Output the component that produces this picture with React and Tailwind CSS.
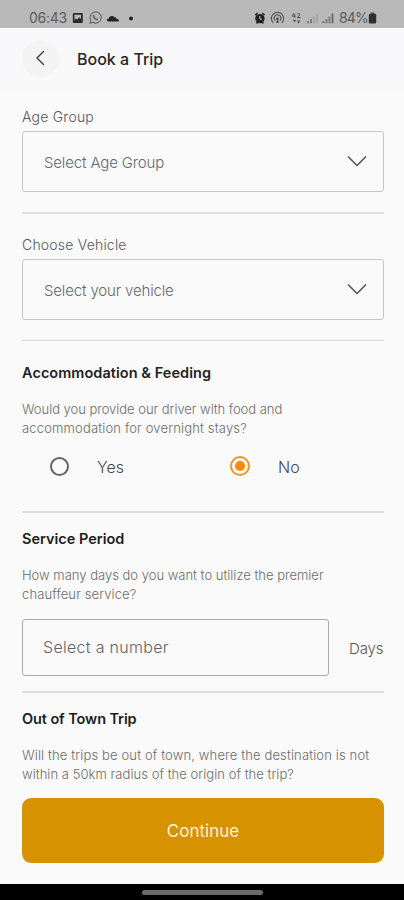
const Line = ({ className = "", children }) => (
  <div className={"whitespace-nowrap " + className}>{children}</div>
);

const Divider = ({ className }) => <div className={"ml-[22px] mr-[20px] " + className} />;

const Chevron = () => (
  <svg width="20" height="13" viewBox="0 0 20 13" fill="none" stroke="#5c5c5c" strokeWidth="1.7" strokeLinecap="round" strokeLinejoin="round">
    <path d="M1.5 2 L10 10.5 L18.5 2" />
  </svg>
);

const SelectBox = ({ text }) => (
  <div className="ml-[22px] mr-[20px] flex h-[61px] items-center justify-between rounded-[3px] border border-[#c6c6c6] pl-[21px] pr-[16px]">
    <Line className="pt-[2px] text-[15px] leading-[20px] font-light tracking-[-0.15px] text-[#66666a]">{text}</Line>
    <Chevron />
  </div>
);

const StatusBar = () => (
  <div className="flex h-[28px] items-center bg-[#b9b9b9] pt-[8px] text-[#5c5c5c]">
    <Line className="ml-[29px] w-[43px] text-[14px] leading-[20px] tracking-[-0.3px]">06:43</Line>
    <svg width="64" height="16" viewBox="72 0 64 16">
      <rect x="72.8" y="3" width="10" height="10" rx="1" fill="#2c2c2c" />
      <path d="M74.5 4.8H81V9L79.3 7.2L77.2 9.6L76 8.5L74.5 10Z" fill="#b9b9b9" />
      <path d="M90 13.2L90.9 10.4A5.6 5.6 0 1 1 92.8 12.3Z" fill="none" stroke="#666" strokeWidth="1.1" />
      <path d="M93 5.2C92.5 8 95.5 10.8 98 10L98.3 8.8L96.9 8.2L96.3 8.9L94.4 7L94.9 6.2L94.2 5Z" fill="#5c5c5c" />
      <path d="M108.5 11.5C106.4 11.5 106.5 8.8 108.8 8.6C109 5.8 113 4.9 114.4 7.4C116 7.1 116.7 8.3 116.7 8.9C119.5 8.8 119.5 11.5 117.8 11.5Z" fill="#242424" />
      <circle cx="131" cy="8.5" r="2" fill="#222" />
    </svg>
    <svg className="ml-[118px]" width="84" height="16" viewBox="254 0 84 16" fill="none">
      <path d="M255.2 5L257.6 3.2M264.6 5L262.2 3.2M256.5 13.4L257.8 12M263.3 13.4L262 12" stroke="#1e1e1e" strokeWidth="1.5" />
      <circle cx="259.9" cy="8.6" r="4.7" fill="#1e1e1e" />
      <path d="M259.8 6V9L262 9.3" stroke="#c8c8c8" strokeWidth="1" />
      <g stroke="#4e4e4e" strokeWidth="1.1">
        <path d="M273.3 12.8A6.1 6.1 0 1 1 281.7 12.8" />
        <path d="M275.2 10.7A3.4 3.4 0 1 1 279.8 10.7" />
      </g>
      <circle cx="277.5" cy="8.8" r="1.2" fill="#3c3c3c" />
      <path d="M277.5 9.2L279 12.8H276Z" fill="#3c3c3c" />
      <path d="M294 3L292.4 6.2H295.6M294.8 4.3V7.6M297.2 4.2C298 2.6 300.2 3.4 299.6 5C299.2 6.3 297.8 6.8 297 7.6H300.6" stroke="#4e4e4e" strokeWidth="1" />
      <path d="M293 9.8H296L294.5 12.4ZM297 10.6H300.2L298.6 13.8Z" fill="#4e4e4e" />
      <path d="M308 11V13.3M311 9V13.3" stroke="#777" strokeWidth="1.8" />
      <path d="M314 6.5V13.3M317 4V13.3" stroke="#a3a3a3" strokeWidth="1.8" />
      <path d="M323.4 11V13.3M326.5 9V13.3M329.5 6.5V13.3" stroke="#777" strokeWidth="1.8" />
      <path d="M332.5 3.5V13.3" stroke="#666" strokeWidth="1.8" />
    </svg>
    <Line className="ml-[1px] w-[29px] text-[14px] leading-[20px] tracking-[-0.9px]">84%</Line>
    <svg width="9" height="16" viewBox="0 0 9 16">
      <rect x="2.6" y="2.6" width="3.8" height="2" fill="#444" />
      <rect x="0.8" y="4" width="7.4" height="9.6" rx="1" fill="#303030" />
    </svg>
  </div>
);

export default function App() {
  return (
    <div className="flex h-[900px] w-[404px] flex-col overflow-hidden bg-[#fafafa] font-['Inter','Liberation_Sans',sans-serif]">
      <StatusBar />
      <div className="flex h-[62px] items-center border-t border-white bg-[#f9f9fb] pb-[3px] pl-[22px]">
        <div className="flex size-[37px] items-center justify-center rounded-full bg-[#f4f4f5]">
          <svg width="12" height="18" viewBox="0 0 12 18" fill="none" stroke="#3c3c3c" strokeWidth="1.4" strokeLinecap="round" strokeLinejoin="round">
            <path d="M8.5 2.5L2 9L8.5 15.5" />
          </svg>
        </div>
        <Line className="ml-[18px] pt-px text-[16px] leading-[20px] font-medium text-[#262626]">Book a Trip</Line>
      </div>

      <Line className="mt-[17px] h-[24px] pl-[22px] text-[14px] leading-[20px] font-light tracking-[0.22px] text-[#55555a]">Age Group</Line>
      <SelectBox text="Select Age Group" />
      <Divider className="mt-[20px] h-[2px] bg-[#e0e0e0]" />
      <Line className="mt-[21px] h-[24px] pl-[22px] text-[14px] leading-[20px] font-light tracking-[0.2px] text-[#55555a]">Choose Vehicle</Line>
      <SelectBox text="Select your vehicle" />
      <Divider className="mt-[20px] h-px bg-[#d4d4d4]" />

      <Line className="mt-[22px] pl-[22px] text-[14.5px] leading-[20px] font-semibold tracking-[0.05px] text-[#222]">Accommodation &amp; Feeding</Line>
      <div className="mt-[17px] pl-[22px] text-[13px] leading-[19px] font-light text-[#6b6b6b]">
        <Line className="tracking-[-0.03px]">Would you provide our driver with food and</Line>
        <Line className="tracking-[0.16px]">accommodation for overnight stays?</Line>
      </div>
      <div className="mt-[18px] flex h-[20px] items-center pl-[50px] text-[16px] leading-[20px] font-light text-[#48484a]">
        <div className="size-[19px] rounded-full border-2 border-[#666]" />
        <Line className="ml-[28px] w-[133px] pt-px">Yes</Line>
        <div className="flex size-[20px] items-center justify-center rounded-full border-2 border-[#f8941d]">
          <div className="size-[10px] rounded-full bg-[#f98b0b]" />
        </div>
        <Line className="ml-[28px] pt-px">No</Line>
      </div>
      <Divider className="mt-[35px] h-[1.5px] bg-[#dcdcdc]" />

      <Line className="mt-[16px] pl-[22px] text-[14.5px] leading-[20px] font-semibold text-[#1c1c1c]">Service Period</Line>
      <div className="mt-[17px] pl-[22px] text-[13px] leading-[19px] font-light text-[#6b6b6b]">
        <Line>How many days do you want to utilize the premier</Line>
        <Line className="tracking-[0.12px]">chauffeur service?</Line>
      </div>
      <div className="mt-[15px] flex h-[57px] items-center pl-[22px]">
        <div className="flex h-[57px] w-[307px] items-center rounded-[3px] border border-[#ababab] pl-[20px]">
          <Line className="text-[16px] leading-[20px] font-light tracking-[0.3px] text-[#626266]">Select a number</Line>
        </div>
        <Line className="ml-[20px] pt-[3px] text-[15px] leading-[20px] font-light tracking-[-0.1px] text-[#58585a]">Days</Line>
      </div>
      <Divider className="mt-[15px] h-[2px] bg-[#dedede]" />

      <Line className="mt-[16px] pl-[22px] text-[14.5px] leading-[20px] font-semibold tracking-[-0.1px] text-[#1c1c1c]">Out of Town Trip</Line>
      <div className="mt-[17px] pl-[22px] text-[13px] leading-[19px] font-light text-[#6b6b6b]">
        <Line className="tracking-[0.14px]">Will the trips be out of town, where the destination is not</Line>
        <Line className="tracking-[0.05px]">within a 50km radius of the origin of the trip?</Line>
      </div>
      <button className="ml-[22px] mr-[20px] mt-[14px] flex h-[65px] items-center justify-center rounded-[9px] bg-[#d79200] pt-[2px] text-[17px] leading-[20px] text-[#fdf3d8]">Continue</button>
      <div className="mt-auto flex h-[16px] justify-center bg-black pt-[6px]">
        <div className="h-[5px] w-[121px] rounded-full bg-[#6a6a6a]" />
      </div>
    </div>
  );
}
